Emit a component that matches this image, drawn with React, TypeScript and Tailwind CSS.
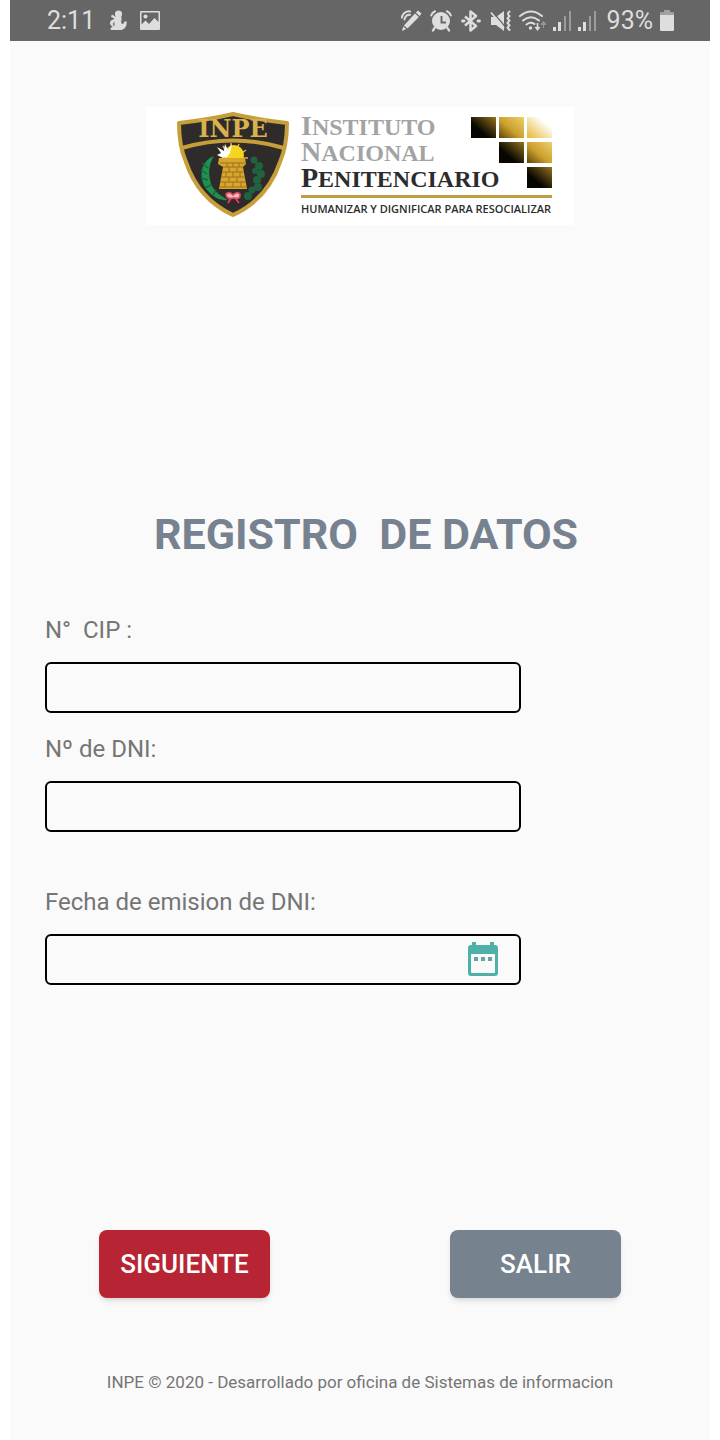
import React, { useState } from "react";

type Field = {
    id: string;
    label: string;
    spacing: string;
    calendar?: boolean;
};

const fields: Field[] = [
    { id: "cip", label: "N°  CIP :", spacing: "mt-[54px]" },
    { id: "dni", label: "Nº de DNI:", spacing: "mt-5" },
    { id: "emision", label: "Fecha de emision de DNI:", spacing: "mt-[54px]", calendar: true },
];

const SignalIcon = () => (
    <svg width="18" height="21" viewBox="0 0 18 21" fill="#dedede">
        <rect x="0" y="17" width="3" height="4" />
        <rect x="5" y="12" width="3" height="9" />
        <rect x="11" y="6" width="2" height="15" opacity="0.45" />
        <rect x="16" y="1" width="2" height="20" opacity="0.45" />
    </svg>
);

const StatusBar = () => (
    <header className="flex h-[41px] items-center justify-between bg-[#666666] pr-9 pl-[37px] text-[25px] text-[#dedede]">
        <div className="flex items-center">
            <span>2:11</span>
            <svg className="ml-3.5" width="18" height="21" viewBox="0 0 18 21" fill="#dedede">
                <circle cx="9.500" cy="4" r="3.600" />
                <path d="M7 6.500h5c1.600 3-.7 4.600.6 6.800.8 1.400 2.600.6 2.400-1.500l2.500-.5c.7 5.200-2 8.500-6.500 8.700H2c-1.200-1.600.5-2.800 1.800-3.400C-.8 14.200.8 10.300 4.300 9.500z" />
                <path d="M3 4.500l4 2.500-1 2L2 6.800z" />
                <path d="M5.500 12.500q-2 1.500 0 3" fill="none" stroke="#666666" strokeWidth="1.200" />
            </svg>
            <svg className="ml-3" width="22" height="21" viewBox="0 0 22 21" fill="#dedede">
                <path d="M2 1h18a1 1 0 0 1 1 1v17a1 1 0 0 1-1 1H2a1 1 0 0 1-1-1V2a1 1 0 0 1 1-1zm.5 1.500v12l4-4 3.500 3.500 5.500-6 4 4V2.500z" fillRule="evenodd" />
                <circle cx="6.500" cy="6.500" r="2" />
            </svg>
        </div>
        <div className="flex items-center gap-[7px]">
            <svg width="22" height="22" viewBox="0 0 22 22" fill="#dedede">
                <path d="M17 .5l3.500 3-1.800 2.400-3.800-3.200zM14 3.600l3.900 3.300L6.500 18.600l-3.600-3.200zM2.200 16.400l3 2.700-4.200 2z" />
                <path d="M.8 7.500C1.500 3.500 5 1 9 1.400M3.500 9.500c.2-3 2.500-5 5.500-4.800" fill="none" stroke="#dedede" strokeWidth="2" strokeLinecap="round" />
            </svg>
            <svg width="22" height="22" viewBox="0 0 22 22">
                <circle cx="11" cy="11" r="9" fill="#dedede" />
                <path d="M4.500 18l-1.500 2.500M17.500 18l1.500 2.500" stroke="#dedede" strokeWidth="2.400" strokeLinecap="round" />
                <path d="M1.200 5.500Q2 2.500 5 1.300M20.800 5.500Q20 2.500 17 1.300" stroke="#dedede" strokeWidth="2" fill="none" strokeLinecap="round" />
                <path d="M11.500 6v6.500h4.500" stroke="#666666" strokeWidth="1.900" fill="none" />
            </svg>
            <svg className="mx-0.5" width="20" height="22" viewBox="0 0 20 22" fill="none" stroke="#dedede">
                <path d="M4 6.500l11 9.500-5.500 4.500v-19L15 6 4 15.500" strokeWidth="2.500" strokeLinejoin="round" />
                <path d="M1.500 11h1.500M17 11h1.500" strokeWidth="2.800" strokeLinecap="round" />
            </svg>
            <svg width="22" height="22" viewBox="0 0 22 22" fill="#dedede">
                <path d="M1 7h5l8-6v20l-8-6H1z" />
                <path d="M2 1l13 15.500" stroke="#666666" strokeWidth="1.200" />
                <path d="M1 2.500l13 15.500" stroke="#dedede" strokeWidth="1.800" />
                <path d="M19.500 1.500q-3 2.300 0 4.600 0 0-2 2.300 0 0 2 2.300 0 0-2 2.300 0 0 2 2.300 0 0-2 2.300l2 2.400" stroke="#dedede" strokeWidth="2" fill="none" strokeLinecap="round" strokeLinejoin="round" />
            </svg>
            <svg width="27" height="22" viewBox="0 0 27 22" fill="none" stroke="#dedede" strokeWidth="2">
                <path d="M1 6q11-9 22 0M4 10.500q8-6.500 16 0M7.500 14.500q4-3.200 8-.5" strokeLinecap="round" />
                <circle cx="11.500" cy="18" r="1.700" fill="#dedede" stroke="none" />
                <path d="M18.500 13v6" strokeWidth="1.600" />
                <path d="M15.500 17h6l-3 4z" fill="#dedede" stroke="none" />
                <path d="M24.500 18v-4M22 14.500h5l-2.500-3z" fill="#dedede" strokeWidth="1" opacity="0.4" />
            </svg>
            <SignalIcon />
            <SignalIcon />
            <span className="ml-1">93%</span>
            <svg width="14" height="22" viewBox="0 0 14 22" fill="#dedede">
                <path d="M4 0h6v2h3q1 0 1 1v2H0V3q0-1 1-1h3z" opacity="0.5" />
                <path d="M0 5h14v15q0 1-1 1H1q-1 0-1-1z" />
            </svg>
        </div>
    </header>
);

const Shield = () => (
    <svg width="112" height="106" viewBox="0 0 112 106">
        <path d="M2 11Q30 8 56 2q26 6 54 9Q110 34 103 50C95 74 80 92 56 103 32 92 17 74 9 50Q2 34 2 11z" fill="#2f2b2a" stroke="#c79f3a" strokeWidth="4" strokeLinejoin="round" />
        <path d="M5 36Q56 21 107 36" fill="none" stroke="#c79f3a" strokeWidth="4" />
        <text x="56" y="25" textAnchor="middle" fill="#d8b24c" fontFamily="'DejaVu Serif', serif" fontWeight="bold" fontSize="24">INPE</text>
        <path d="M37 44C24 48 20 67 31 79c6 7 14 10 20 9-8-5-16-9-18-20-2-10 0-18 4-24z" fill="#1c9150" />
        <path d="M25 51l6 5M24 58l6 4M24 66l7 2M28 76l6-3M36 83l3-5" stroke="#17683c" strokeWidth="1.500" />
        <g fill="#20633e">
            <circle cx="77" cy="48" r="3.500" />
            <circle cx="82" cy="54" r="4" />
            <circle cx="78" cy="59" r="3" />
            <circle cx="84" cy="62" r="4" />
            <circle cx="80" cy="68" r="4" />
            <circle cx="81" cy="75" r="4" />
            <circle cx="75" cy="78" r="3.500" />
            <circle cx="71" cy="84" r="4" />
        </g>
        <path d="M46 34l3 5M54 31v5M62 32l-2 5M69 38l-4 3M71 46h-5" stroke="#d8b24c" strokeWidth="1.500" />
        <circle cx="57" cy="43" r="10" fill="#f5d51e" />
        <path d="M40 35l7 4 1-7 3 6 4-6-2 9-3 4-4 1-6-3 4-2z" fill="#ffffff" />
        <path d="M42 46h26l1 6-3 3 4 22H42l4-22-5-3z" fill="#d9a62d" />
        <path d="M43 51h25M46 55h20M45 60h22M44 65h24M43 70h26M43 75h26M50 51v4M56 51v4M62 51v4M52 55v5M60 55v5M49 60v5M56 60v5M63 60v5M52 65v5M60 65v5M48 70v5M56 70v5M64 70v5" stroke="#8c651c" strokeWidth="0.800" />
        <path d="M49 82q4-3 7 1 4-4 7-1 1 6-6 4-8 2-8-4zM54 86l-3 5M58 86l4 5" fill="#f3b8bd" stroke="#d9475b" strokeWidth="1.700" />
    </svg>
);

const SquaresMark = () => (
    <svg className="absolute top-1 right-0" width="81" height="71" viewBox="0 0 81 71">
        <defs>
            <linearGradient id="dark" x1="0" y1="1" x2="1" y2="0">
                <stop offset="0.35" stopColor="#080602" />
                <stop offset="1" stopColor="#94731f" />
            </linearGradient>
            <linearGradient id="gold" x1="0" y1="1" x2="1" y2="0">
                <stop offset="0" stopColor="#5e430c" />
                <stop offset="0.45" stopColor="#cba02c" />
                <stop offset="1" stopColor="#ecd06a" />
            </linearGradient>
            <linearGradient id="light" x1="0" y1="1" x2="1" y2="0">
                <stop offset="0" stopColor="#e5b930" />
                <stop offset="0.75" stopColor="#ffffff" />
            </linearGradient>
        </defs>
        <rect x="0" y="0" width="25" height="21" fill="url(#dark)" />
        <rect x="28" y="0" width="25" height="21" fill="url(#gold)" />
        <rect x="56" y="0" width="25" height="21" fill="url(#light)" />
        <rect x="28" y="25" width="25" height="21" fill="url(#dark)" />
        <rect x="56" y="25" width="25" height="21" fill="url(#gold)" />
        <rect x="56" y="50" width="25" height="21" fill="url(#dark)" />
    </svg>
);

const Logo = () => (
    <div className="flex h-[118px] w-[428px] gap-3 self-center bg-white pt-[5px] pl-[31px]">
        <Shield />
        <div className="relative mt-px w-[251px] font-['Liberation_Serif',serif] whitespace-nowrap">
            <div className="text-2xl leading-[26px] font-bold text-[#a3a3a3] uppercase">
                <p className="h-[26px] first-letter:text-[28px]">Instituto</p>
                <p className="h-[26px] first-letter:text-[28px]">Nacional</p>
                <p className="h-[26px] text-[#2c2c2c] first-letter:text-[28px]">Penitenciario</p>
            </div>
            <div className="mt-1 h-[3px] bg-[#bd9f41]" />
            <p className="mt-[3px] font-['Open_Sans',sans-serif] text-[11px] leading-4 font-semibold text-[#2c2c2c]">
                HUMANIZAR Y DIGNIFICAR PARA RESOCIALIZAR
            </p>
            <SquaresMark />
        </div>
    </div>
);

const CalendarIcon = () => (
    <svg width="32" height="36" viewBox="0 0 32 36">
        <path d="M5 1h4v3h14V1h4v3h1q3 0 3 3v25q0 3-3 3H4q-3 0-3-3V7q0-3 3-3h1zM4 13v18q0 1 1 1h22q1 0 1-1V13z" fill="#4db0a9" fillRule="evenodd" />
        <path d="M7 16h4v4H7zM14 16h4v4h-4zM21 16h4v4h-4z" fill="#6aa49f" />
    </svg>
);

const App: React.FC = () => {
    const [values, setValues] = useState<Record<string, string>>({});

    return (
        <div className="min-h-screen bg-white px-[10px] font-[Roboto,sans-serif]">
            <div className="flex min-h-screen flex-col bg-[#fafafa]">
                <StatusBar />
                <main className="flex flex-col pt-[66px]">
                    <Logo />
                    <h1 className="mt-[283px] pl-3 text-center text-[43px] leading-[52px] font-bold whitespace-pre text-[#76828f]">
                        {"REGISTRO  DE DATOS"}
                    </h1>
                    <form className="flex flex-col" onSubmit={(e) => e.preventDefault()}>
                        <div className="px-[35px]">
                            {fields.map((field) => (
                                <div key={field.id} className={field.spacing}>
                                    <label htmlFor={field.id} className="block text-2xl leading-8 whitespace-pre text-[#757575]">
                                        {field.label}
                                    </label>
                                    <div className="relative mt-4 w-[476px] max-w-full">
                                        <input
                                            id={field.id}
                                            type="text"
                                            value={values[field.id] ?? ""}
                                            onChange={(e) => setValues({ ...values, [field.id]: e.target.value })}
                                            className="block h-[51px] w-full rounded-md border-2 border-black bg-transparent px-3 text-2xl text-[#333333] outline-none"
                                        />
                                        {field.calendar && (
                                            <button type="button" aria-label="Calendario" className="absolute top-[7px] right-[22px] cursor-pointer">
                                                <CalendarIcon />
                                            </button>
                                        )}
                                    </div>
                                </div>
                            ))}
                        </div>
                        <div className="mt-[245px] flex justify-between px-[89px] text-[26px] font-medium text-white">
                            <button type="submit" className="h-[68px] w-[171px] cursor-pointer rounded-lg bg-[#b72534] shadow-md">
                                SIGUIENTE
                            </button>
                            <button type="button" className="h-[68px] w-[171px] cursor-pointer rounded-lg bg-[#76828e] shadow-md">
                                SALIR
                            </button>
                        </div>
                    </form>
                </main>
                <footer className="mt-[72px] pb-[46px] text-center text-[17px] leading-6 text-[#757575]">
                    INPE © 2020 - Desarrollado por oficina de Sistemas de informacion
                </footer>
            </div>
        </div>
    );
};

export default App;
